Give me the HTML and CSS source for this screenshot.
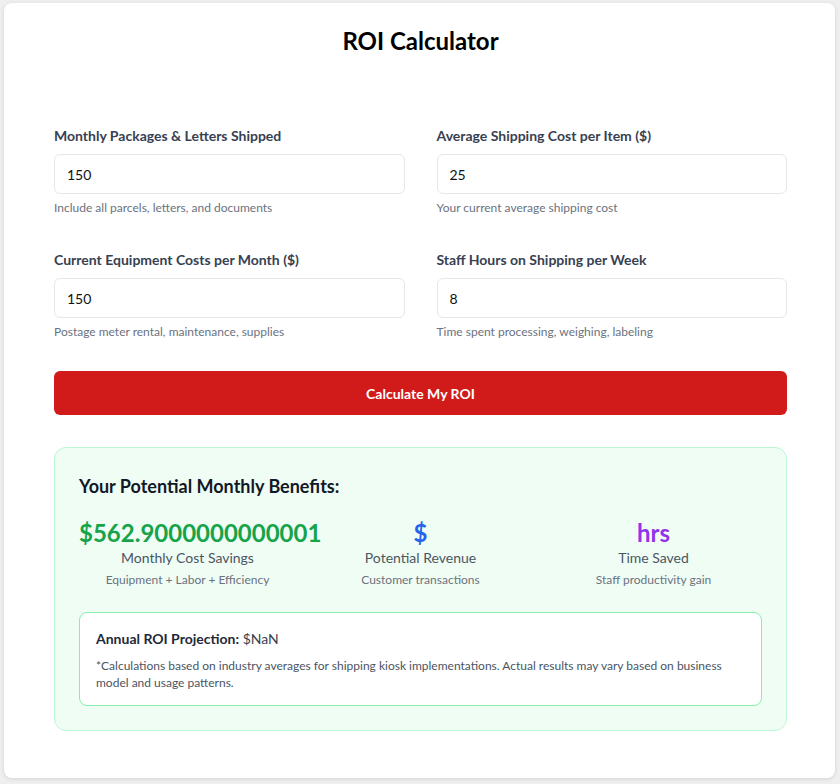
FILE: index.html
```html
<!DOCTYPE html>
<html lang="en">
<head>
<meta charset="utf-8">
<title>ROI Calculator</title>
<link rel="stylesheet" href="styles.css">
</head>
<body>
<div class="card">
  <h1 class="title">ROI Calculator</h1>
  <div class="form-grid">
    <div class="field">
      <label class="label">Monthly Packages &amp; Letters Shipped</label>
      <input class="input" type="text" value="150">
      <div class="help">Include all parcels, letters, and documents</div>
    </div>
    <div class="field">
      <label class="label">Average Shipping Cost per Item ($)</label>
      <input class="input" type="text" value="25">
      <div class="help">Your current average shipping cost</div>
    </div>
    <div class="field">
      <label class="label">Current Equipment Costs per Month ($)</label>
      <input class="input" type="text" value="150">
      <div class="help">Postage meter rental, maintenance, supplies</div>
    </div>
    <div class="field">
      <label class="label">Staff Hours on Shipping per Week</label>
      <input class="input" type="text" value="8">
      <div class="help">Time spent processing, weighing, labeling</div>
    </div>
  </div>
  <button class="btn">Calculate My ROI</button>
  <div class="results">
    <h2 class="results-title">Your Potential Monthly Benefits:</h2>
    <div class="stats">
      <div class="stat">
        <div class="value green">$562.9000000000001</div>
        <div class="stat-label">Monthly Cost Savings</div>
        <div class="stat-sub">Equipment + Labor + Efficiency</div>
      </div>
      <div class="stat">
        <div class="value blue">$</div>
        <div class="stat-label">Potential Revenue</div>
        <div class="stat-sub">Customer transactions</div>
      </div>
      <div class="stat">
        <div class="value purple">hrs</div>
        <div class="stat-label">Time Saved</div>
        <div class="stat-sub">Staff productivity gain</div>
      </div>
    </div>
    <div class="annual">
      <p class="annual-line"><strong>Annual ROI Projection:</strong> $NaN</p>
      <p class="note">*Calculations based on industry averages for shipping kiosk implementations. Actual results may vary based on business model and usage patterns.</p>
    </div>
  </div>
</div>
</body>
</html>
```
FILE: styles.css
```css
* { box-sizing: border-box; }
html, body { margin: 0; padding: 0; }
body {
  background: #efefef;
  font-family: "Lato", "Noto Sans", sans-serif;
  color: #111827;
  padding: 3px 5px 6px 4px;
}
.card {
  background: #fff;
  border-radius: 8px;
  box-shadow: 0 1px 4px rgba(0,0,0,0.12);
  padding: 22px 48px 47px 50px;
  min-height: 775px;
}
.title {
  margin: 0 0 69px;
  text-align: center;
  font-size: 24px;
  line-height: 32px;
  font-weight: 700;
  color: #000;
}
.form-grid {
  display: grid;
  grid-template-columns: minmax(0, 1fr) minmax(0, 1fr);
  column-gap: 32px;
  row-gap: 34px;
}
.field { display: flex; flex-direction: column; }
.label {
  font-size: 14px;
  line-height: 20px;
  font-weight: 700;
  color: #374151;
  margin-bottom: 8px;
}
.input {
  height: 40px;
  border: 1px solid #e5e7eb;
  border-radius: 6px;
  padding: 0 12px;
  font: inherit;
  font-size: 14px;
  color: #111;
  background: #fff;
}
.help {
  margin-top: 6px;
  font-size: 12px;
  line-height: 16px;
  color: #6b7280;
}
.btn {
  display: block;
  width: 100%;
  margin-top: 31px;
  height: 44px;
  border: 0;
  border-radius: 6px;
  background: #d11a1a;
  color: #fff;
  font: inherit;
  font-size: 14px;
  font-weight: 700;
}
.results {
  margin-top: 32px;
  background: #f0fdf4;
  border: 1px solid #bbf7d0;
  border-radius: 12px;
  padding: 24px 24px 24px;
}
.results-title {
  margin: 0 0 17px;
  font-size: 18px;
  line-height: 28px;
  font-weight: 700;
  color: #111827;
}
.stats {
  display: grid;
  grid-template-columns: repeat(3, minmax(0, 1fr));
  column-gap: 16px;
  text-align: center;
}
.value {
  font-size: 24px;
  line-height: 32px;
  font-weight: 700;
  white-space: nowrap;
}
.green { color: #16a34a; }
.blue { color: #2563eb; }
.purple { color: #9333ea; }
.stat-label {
  font-size: 14px;
  line-height: 20px;
  color: #4b5563;
  margin-top: -1px;
}
.stat-sub {
  margin-top: 4px;
  font-size: 12px;
  line-height: 16px;
  color: #6b7280;
}
.annual {
  margin-top: 24px;
  background: #fff;
  border: 1px solid #86efac;
  border-radius: 8px;
  padding: 16px 16px 14px;
}
.annual-line {
  margin: 0;
  font-size: 14px;
  line-height: 20px;
  color: #374151;
}
.annual-line strong { color: #1f2937; font-weight: 700; }
.note {
  margin: 8px 0 0;
  font-size: 12px;
  line-height: 17px;
  color: #4b5563;
}
```
